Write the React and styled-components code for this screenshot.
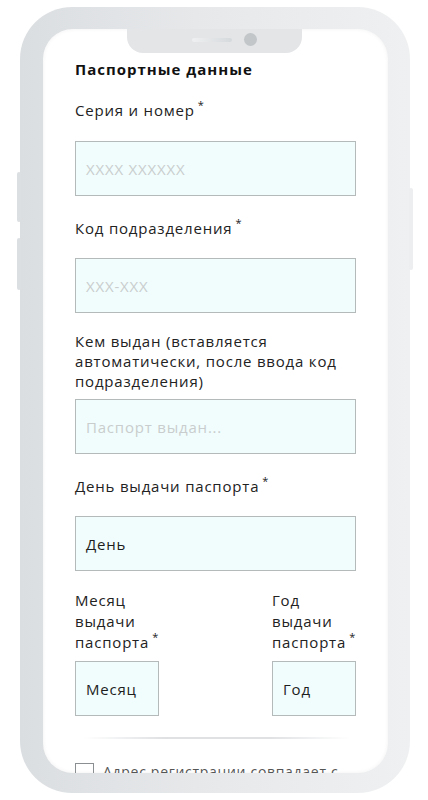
import React from 'react'
import styled, { createGlobalStyle } from 'styled-components'

const GlobalStyle = createGlobalStyle`
  body {
    margin: 0;
    background: #ffffff;
    font-family: 'Open Sans', 'Noto Sans', sans-serif;
  }
`

const Phone = styled.div`
  position: relative;
  width: 390px;
  height: 786px;
  margin: 7px 0 0 20px;
  padding: 22px 22px 20px 23px;
  box-sizing: border-box;
  border-radius: 52px;
  background: linear-gradient(90deg, #dbdee1 0%, #e6e8ea 45%, #eff0f1 100%);
`
const SideButton = styled.div`
  position: absolute;
  width: 4px;
  top: ${props => props.$top}px;
  height: ${props => props.$height}px;
  ${props => (props.$right ? 'right: -3px;' : 'left: -3px;')}
  background: ${props => (props.$right ? '#eceeef' : '#dcdfe2')};
  border-radius: 2px;
`
const Screen = styled.div`
  position: relative;
  height: 100%;
  overflow: hidden;
  border-radius: 30px;
  background: #ffffff;
  box-shadow: inset 0 0 4px rgba(0, 0, 0, 0.06);
`
const Notch = styled.div`
  position: absolute;
  top: 0;
  left: 84px;
  width: 175px;
  height: 24px;
  background: #e3e5e7;
  border-radius: 0 0 16px 16px;
  display: flex;
  align-items: center;
  justify-content: center;
  gap: 12px;
  padding-left: 20px;
  box-sizing: border-box;
`
const Speaker = styled.div`
  width: 40px;
  height: 4px;
  border-radius: 2px;
  background: linear-gradient(90deg, #eef0f1, #d6d9dc);
  margin-top: -2px;
`
const Camera = styled.div`
  width: 13px;
  height: 13px;
  border-radius: 50%;
  background: #c3c6c9;
  margin-top: -3px;
`
const Content = styled.div`
  padding: 30px 32px 0 32px;
`
const Title = styled.h2`
  margin: 0;
  font-size: 15px;
  line-height: 20px;
  font-weight: 700;
  letter-spacing: 1px;
  color: #111;
`
const Field = styled.div`
  display: flex;
  flex-direction: column;
  margin-top: ${props => props.$top}px;
`
const Label = styled.div`
  font-size: 15px;
  line-height: ${props => props.$lh || 20}px;
  letter-spacing: 0.8px;
  color: #222;
  margin-bottom: ${props => props.$gap}px;
`
const Star = styled.span`
  position: relative;
  top: -7px;
  margin-left: 3px;
  font-size: 11px;
  line-height: 0;
`
const Input = styled.div`
  height: 55px;
  box-sizing: border-box;
  border: 1px solid #b4b9b9;
  background: #f1fdfd;
  display: flex;
  align-items: center;
  padding-left: 10px;
  font-size: 15px;
  font-weight: ${props => (props.$placeholder ? 400 : 500)};
  letter-spacing: 0.8px;
  color: ${props => (props.$placeholder ? '#c9cdcd' : '#1e1e1e')};
  width: ${props => (props.$w ? `${props.$w}px` : 'auto')};
`
const Row = styled.div`
  display: flex;
  justify-content: space-between;
  margin-top: 19px;
`
const Divider = styled.div`
  height: 2px;
  margin: 21px 6px 0 8px;
  background: linear-gradient(90deg, rgba(225, 227, 229, 0), #dfe1e3 30%, #dfe1e3 70%, rgba(225, 227, 229, 0));
`
const CheckRow = styled.label`
  display: flex;
  align-items: flex-start;
  gap: 9px;
  margin-top: 24px;
  font-size: 14px;
  line-height: 18px;
  letter-spacing: 0.7px;
  color: #555;
`
const Box = styled.span`
  width: 19px;
  height: 19px;
  box-sizing: border-box;
  border: 1px solid #8b8f92;
  flex-shrink: 0;
`

const App = () => {
  return (
    <>
      <GlobalStyle />
      <Phone>
        <SideButton $top={165} $height={50} />
        <SideButton $top={231} $height={52} />
        <SideButton $right $top={181} $height={82} />
        <Screen>
          <Notch>
            <Speaker />
            <Camera />
          </Notch>
          <Content>
            <Title>Паспортные данные</Title>
            <Field $top={21}>
              <Label $gap={21}>
                Серия и номер<Star>*</Star>
              </Label>
              <Input $placeholder>XXXX XXXXXX</Input>
            </Field>
            <Field $top={22}>
              <Label $gap={20}>
                Код подразделения<Star>*</Star>
              </Label>
              <Input $placeholder>XXX-XXX</Input>
            </Field>
            <Field $top={18}>
              <Label $gap={8}>Кем выдан (вставляется автоматически, после ввода код подразделения)</Label>
              <Input $placeholder>Паспорт выдан...</Input>
            </Field>
            <Field $top={22}>
              <Label $gap={20}>
                День выдачи паспорта<Star>*</Star>
              </Label>
              <Input>День</Input>
            </Field>
            <Row>
              <Field $top={0}>
                <Label $gap={8} $lh={21}>
                  Месяц
                  <br />
                  выдачи
                  <br />
                  паспорта<Star>*</Star>
                </Label>
                <Input $w={84}>Месяц</Input>
              </Field>
              <Field $top={0}>
                <Label $gap={8} $lh={21}>
                  Год
                  <br />
                  выдачи
                  <br />
                  паспорта<Star>*</Star>
                </Label>
                <Input $w={84}>Год</Input>
              </Field>
            </Row>
            <Divider />
            <CheckRow>
              <Box />
              <span>Адрес регистрации совпадает с адресом проживания</span>
            </CheckRow>
          </Content>
        </Screen>
      </Phone>
    </>
  )
}

export default App
